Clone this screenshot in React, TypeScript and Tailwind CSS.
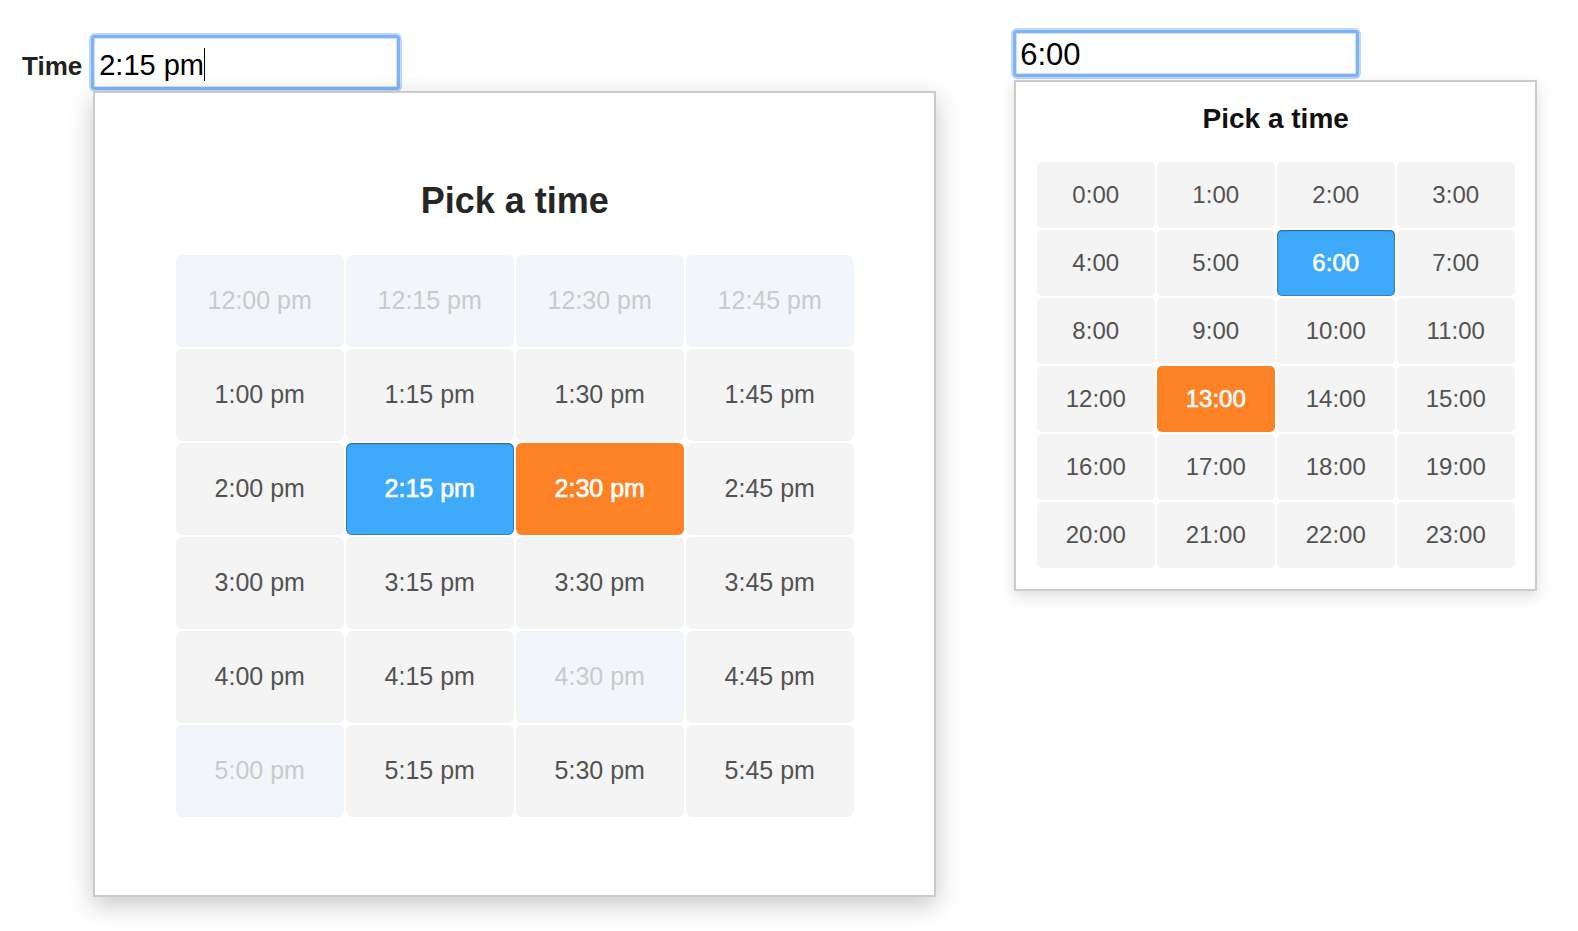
import React from 'react';

type Slot = { label: string; state?: 'off' | 'sel' | 'hot' };

// 12:00 pm .. 5:45 pm, quarter steps
const pmSlots: Slot[] = [];
for (let h = 12; h <= 17; h++) {
  for (const m of ['00', '15', '30', '45']) {
    const hh = h > 12 ? h - 12 : h;
    pmSlots.push({ label: `${hh}:${m} pm` });
  }
}
const off = ['12:00 pm', '12:15 pm', '12:30 pm', '12:45 pm', '4:30 pm', '5:00 pm'];
pmSlots.forEach(s => {
  if (off.includes(s.label)) s.state = 'off';
  if (s.label === '2:15 pm') s.state = 'sel';
  if (s.label === '2:30 pm') s.state = 'hot';
});

const hourSlots: Slot[] = Array.from({ length: 24 }, (_, i) => ({
  label: `${i}:00`,
  state: i === 6 ? 'sel' : i === 13 ? 'hot' : undefined,
}));

function cellClass(state?: Slot['state']) {
  if (state === 'off') return 'bg-[#f2f6fa] text-[#cacaca]';
  if (state === 'sel')
    return 'bg-[#3eaaf9] text-white [-webkit-text-stroke:0.6px_#fff] shadow-[inset_0_0_0_1px_rgba(40,90,140,0.45),inset_0_1px_2px_rgba(0,0,0,0.3)]';
  if (state === 'hot') return 'bg-[#fd8226] text-white [-webkit-text-stroke:0.6px_#fff]';
  return 'bg-[#f4f4f4] text-[#525252]';
}

function FocusBox({ className, children }: { className: string; children: React.ReactNode }) {
  return (
    <div
      className={`rounded-[4px] border-[3px] border-[#7fb3f4] bg-white text-black shadow-[0_0_0_2px_#bcd8fb,inset_0_0_0_1px_#cde2fc] ${className}`}
    >
      {children}
    </div>
  );
}

export default function App() {
  return (
    <div className="w-full h-[931px] bg-white overflow-hidden flex items-start pt-[30px] pl-[22px] font-['Liberation_Sans',Arial,sans-serif]">
      {/* left picker */}
      <div className="flex items-start mt-[5px]">
        <label className="mt-[16px] mr-[9px] text-[26px] leading-[30px] font-bold text-[#222]">Time</label>
        <div className="flex flex-col">
          <FocusBox className="w-[309px] h-[55px] pt-[10px] pl-[5px] text-[29px] leading-[34px] whitespace-nowrap">
            2:15 pm<span className="inline-block align-top w-px h-[33px] bg-black" />
          </FocusBox>
          <div className="mt-px ml-[2px] w-[843px] h-[806px] border-2 border-[#cbcbcb] bg-white shadow-[0_8px_24px_rgba(0,0,0,0.22)] flex flex-col items-center pt-[87px]">
            <h3 className="text-[36px] leading-[42px] font-bold text-[#262626] mb-[33px]">Pick a time</h3>
            <div className="grid grid-cols-4 gap-[2px] w-[678px]">
              {pmSlots.map(s => (
                <div
                  key={s.label}
                  className={`h-[92px] rounded-[6px] flex items-center justify-center text-[25px] ${cellClass(s.state)}`}
                >
                  {s.label}
                </div>
              ))}
            </div>
          </div>
        </div>
      </div>

      {/* right picker */}
      <div className="flex flex-col ml-[77px]">
        <FocusBox className="w-[346px] h-[47px] pt-[4px] pl-[4px] text-[31px] leading-[36px]">6:00</FocusBox>
        <div className="mt-[3px] ml-px w-[523px] h-[511px] border-2 border-[#cbcbcb] bg-white shadow-[0_5px_14px_rgba(0,0,0,0.14)] flex flex-col items-center pt-[21px]">
          <h3 className="text-[28px] leading-[32px] font-bold text-[#111] mb-[27px]">Pick a time</h3>
          <div className="grid grid-cols-4 gap-[2px] w-[478px]">
            {hourSlots.map(s => (
              <div
                key={s.label}
                className={`h-[66px] rounded-[5px] flex items-center justify-center text-[24px] ${cellClass(s.state)}`}
              >
                {s.label}
              </div>
            ))}
          </div>
        </div>
      </div>
    </div>
  );
}
